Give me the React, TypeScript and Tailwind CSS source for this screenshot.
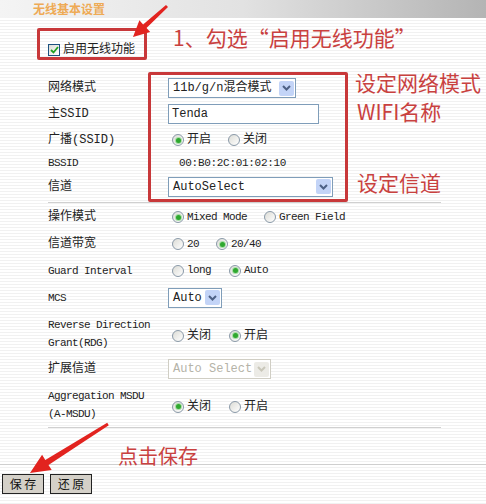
import React from "react";

const cn = '"Liberation Mono", "Noto Sans CJK SC", monospace';
const zh = '"Noto Sans CJK SC", sans-serif';

const Radio: React.FC<{ checked?: boolean; label: string; w?: string; en?: boolean }> = ({ checked, label, w, en }) => (
  <div className={`flex items-center ${w ?? ""}`}>
    <span className="w-[12px] h-[12px] rounded-full border border-[#8a99a8] bg-gradient-to-br from-[#dcdcd6] to-white flex items-center justify-center">
      {checked && <span className="w-[5px] h-[5px] rounded-full bg-[#2fa82f] shadow-[0_0_0_1px_#a6dca6]" />}
    </span>
    <span className={`ml-[3px] text-[#222] ${en ? "text-[11px] tracking-[-0.6px]" : "text-[12px]"}`}>{label}</span>
  </div>
);

const Chevron: React.FC<{ disabled?: boolean }> = ({ disabled }) => (
  <span
    className={`w-[15px] h-[15px] mr-[1px] rounded-[2px] flex items-center justify-center ${
      disabled ? "bg-[#ecebe6]" : "bg-[#c3d4f7]"
    }`}
  >
    <svg width="9" height="6" viewBox="0 0 9 6">
      <path d="M1 1l3.5 3.5L8 1" fill="none" stroke={disabled ? "#c9c7ba" : "#4d6185"} strokeWidth="2" />
    </svg>
  </span>
);

const Select: React.FC<{ value: string; w: string; disabled?: boolean }> = ({ value, w, disabled }) => (
  <div
    className={`${w} h-[20px] flex items-center justify-between border bg-white ${
      disabled ? "border-[#d0cec4] text-[#b5b3a8]" : "border-[#7f9db9] text-[#222]"
    }`}
  >
    <span className="pl-[4px] text-[12px] leading-none">{value}</span>
    <Chevron disabled={disabled} />
  </div>
);

const Row: React.FC<{ label: React.ReactNode; h: string; children: React.ReactNode }> = ({ label, h, children }) => (
  <div className={`flex items-center ${h}`}>
    <div className="w-[120px] text-[12px] text-[#222] leading-[18px]">{label}</div>
    <div className="flex items-center">{children}</div>
  </div>
);

const En: React.FC<{ children: React.ReactNode }> = ({ children }) => (
  <span className="text-[11px] tracking-[-0.6px] leading-[18px] block">{children}</span>
);

export default function App() {
  return (
    <div
      className="relative w-[486px] h-[504px] overflow-hidden bg-[repeating-linear-gradient(to_bottom,#ffffff_0px,#ffffff_2px,#f1f1f1_2px,#f1f1f1_3px)]"
      style={{ fontFamily: cn }}
    >
      {/* header */}
      <div className="h-[18px] bg-gradient-to-r from-[#f4f4f4] via-[#e2e2e2] to-[#b4b4b4] pl-[33px] pt-[2px]">
        <div className="text-[12px] font-bold text-[#eeaa55] leading-[14px]" style={{ fontFamily: zh }}>
          无线基本设置
        </div>
      </div>

      <div className="pl-[48px] pt-[21px] h-[57px] flex items-start">
        <div className="flex items-center mt-[2px]">
          <span className="w-[12px] h-[12px] border border-[#1c5180] bg-gradient-to-br from-[#dcdcd6] to-white flex items-center justify-center">
            <svg width="9" height="8" viewBox="0 0 9 8">
              <path d="M1 4l2.5 2.5L8 1" fill="none" stroke="#21a121" strokeWidth="1.8" />
            </svg>
          </span>
          <span className="ml-[3px] text-[12px] text-[#222]">启用无线功能</span>
        </div>
      </div>

      <div className="pl-[48px]">
        <Row label="网络模式" h="h-[26px]">
          <Select value="11b/g/n混合模式" w="w-[128px]" />
        </Row>
        <Row label="主SSID" h="h-[26px]">
          <div className="w-[151px] h-[20px] border border-[#7f9db9] bg-white flex items-center pl-[3px] text-[12px] text-[#222]">
            Tenda
          </div>
        </Row>
        <Row label="广播(SSID)" h="h-[26px]">
          <div className="flex items-center pl-[4px]">
            <Radio checked label="开启" w="w-[56px]" />
            <Radio label="关闭" />
          </div>
        </Row>
        <Row label={<En>BSSID</En>} h="h-[20px]">
          <span className="pl-[11px] text-[11px] tracking-[-0.3px] text-[#222]">00:B0:2C:01:02:10</span>
        </Row>
        <Row label="信道" h="h-[27px]">
          <Select value="AutoSelect" w="w-[165px]" />
        </Row>

        <div className="mt-[2px] mr-[45px] border-t border-[#d0d0d0]" />

        <Row label="操作模式" h="h-[28px]">
          <div className="flex items-center pl-[4px]">
            <Radio checked en label="Mixed Mode" w="w-[92px]" />
            <Radio en label="Green Field" />
          </div>
        </Row>
        <Row label="信道带宽" h="h-[26px]">
          <div className="flex items-center pl-[4px]">
            <Radio label="20" en w="w-[44px]" />
            <Radio checked en label="20/40" />
          </div>
        </Row>
        <Row label={<En>Guard Interval</En>} h="h-[27px]">
          <div className="flex items-center pl-[4px]">
            <Radio label="long" en w="w-[57px]" />
            <Radio checked en label="Auto" />
          </div>
        </Row>
        <Row label={<En>MCS</En>} h="h-[27px]">
          <Select value="Auto" w="w-[54px]" />
        </Row>
        <Row
          label={
            <En>
              Reverse Direction
              <br />
              Grant(RDG)
            </En>
          }
          h="h-[45px]"
        >
          <div className="flex items-center pl-[4px] mt-[4px]">
            <Radio label="关闭" w="w-[57px]" />
            <Radio checked label="开启" />
          </div>
        </Row>
        <Row label="扩展信道" h="h-[26px]">
          <Select value="Auto Select" w="w-[103px]" disabled />
        </Row>
        <Row
          label={
            <En>
              Aggregation MSDU
              <br />
              (A-MSDU)
            </En>
          }
          h="h-[45px]"
        >
          <div className="flex items-center pl-[4px] mt-[4px]">
            <Radio checked label="关闭" w="w-[57px]" />
            <Radio label="开启" />
          </div>
        </Row>

        <div className="mr-[45px] border-t border-[#d0d0d0]" />
      </div>

      <div className="mt-[36px] border-t border-[#cfcfcf]" />

      <div className="flex gap-[6px] pl-[2px] pt-[9px]">
        <button className="w-[42px] h-[20px] bg-[#d4d0c8] border border-[#222] text-[12px] text-[#111] leading-none" style={{ fontFamily: zh }}>
          保 存
        </button>
        <button className="w-[42px] h-[20px] bg-[#d4d0c8] border border-[#222] text-[12px] text-[#111] leading-none" style={{ fontFamily: zh }}>
          还 原
        </button>
      </div>

      {/* annotations */}
      <div className="absolute left-[37px] top-[28px] w-[110px] h-[32px] border-[3px] border-[#c8383a] rounded-[2px]" />
      <div className="absolute left-[148px] top-[72px] w-[200px] h-[130px] border-[3px] border-[#c8383a] rounded-[2px]" />

      <div className="absolute left-[173px] top-[27px] text-[21px] text-[#c9413f] leading-none" style={{ fontFamily: zh }}>
        1、勾选“启用无线功能”
      </div>
      <div className="absolute left-[355px] top-[72px] text-[21px] text-[#c9413f] leading-none" style={{ fontFamily: zh }}>
        设定网络模式
      </div>
      <div className="absolute left-[357px] top-[101px] text-[21px] text-[#c9413f] leading-none" style={{ fontFamily: zh }}>
        WIFI名称
      </div>
      <div className="absolute left-[357px] top-[172px] text-[21px] text-[#c9413f] leading-none" style={{ fontFamily: zh }}>
        设定信道
      </div>
      <div className="absolute left-[118px] top-[446px] text-[20px] text-[#c9413f] leading-none" style={{ fontFamily: zh }}>
        点击保存
      </div>

      <svg className="absolute inset-0 pointer-events-none" width="486" height="504" viewBox="0 0 486 504">
        <polygon
          points="133,37 150.2,32.1 146.5,28 168,7.1 166,4.9 143.1,24.4 139.4,20.3"
          fill="#e2231f"
        />
        <polygon
          points="30,473 51.7,470 48.5,465 108.8,425.3 107.2,422.7 45.3,459.9 42.1,454.8"
          fill="#e2231f"
        />
      </svg>
    </div>
  );
}
